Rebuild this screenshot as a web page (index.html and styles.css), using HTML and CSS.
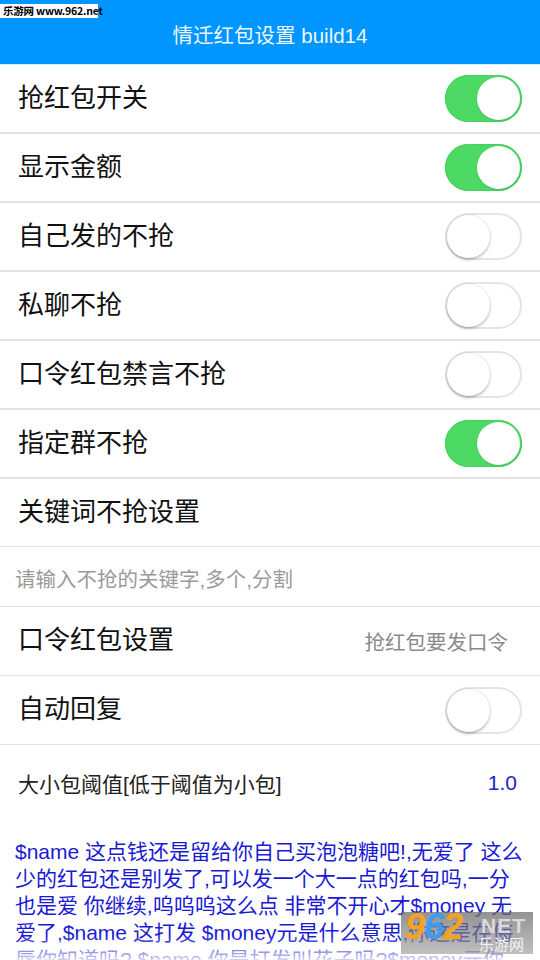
FILE: index.html
```html
<!DOCTYPE html>
<html lang="zh-CN">
<head>
<meta charset="utf-8">
<title>情迁红包设置</title>
<link rel="stylesheet" href="styles.css">
</head>
<body>
<div class="screen">
  <div class="wm-top">乐游网 www.962.net</div>
  <header class="topbar">情迁红包设置 build14</header>

  <div class="row thick"><span class="label">抢红包开关</span><span class="toggle on"><span class="knob"></span></span></div>
  <div class="row thick"><span class="label">显示金额</span><span class="toggle on"><span class="knob"></span></span></div>
  <div class="row thick"><span class="label">自己发的不抢</span><span class="toggle off"><span class="knob"></span></span></div>
  <div class="row thick"><span class="label">私聊不抢</span><span class="toggle off"><span class="knob"></span></span></div>
  <div class="row thick"><span class="label">口令红包禁言不抢</span><span class="toggle off"><span class="knob"></span></span></div>
  <div class="row thick"><span class="label">指定群不抢</span><span class="toggle on"><span class="knob"></span></span></div>

  <div class="row thin"><span class="label">关键词不抢设置</span></div>
  <div class="input-row"><span class="placeholder">请输入不抢的关键字,多个,分割</span></div>
  <div class="row thin tall"><span class="label">口令红包设置</span><span class="hint">抢红包要发口令</span></div>
  <div class="row thin tall"><span class="label">自动回复</span><span class="toggle off"><span class="knob"></span></span></div>

  <div class="threshold"><span class="small-label">大小包阈值[低于阈值为小包]</span><span class="value">1.0</span></div>

  <p class="reply">$name 这点钱还是留给你自己买泡泡糖吧!,无爱了 这么少的红包还是别发了,可以发一个大一点的红包吗,一分也是爱 你继续,呜呜呜这么点 非常不开心才$money 无爱了,$name 这打发 $money元是什么意思,你这是在侮辱你知道吗?,$name 你是打发叫花子吗?$money元你</p>

  <div class="fade"></div>
  <div class="wm-logo">
    <span class="logo-num"><span class="o">9</span><span class="b">6</span><span class="o">2</span></span><span class="logo-net">NET</span>
    <span class="logo-cn">乐游网</span>
  </div>
</div>
</body>
</html>
```

FILE: styles.css
```css
html, body {
  margin: 0;
  padding: 0;
  background: #ffffff;
}
body {
  font-family: "Liberation Sans", "Noto Sans CJK SC", sans-serif;
  color: #111111;
}
.screen {
  position: relative;
  width: 540px;
  height: 960px;
  overflow: hidden;
  background: #ffffff;
}
.wm-top {
  position: absolute;
  left: 0;
  top: 4px;
  width: 98px;
  height: 14px;
  background: #ffffff;
  color: #000000;
  font-family: "Noto Sans CJK SC", "Liberation Sans", sans-serif;
  font-size: 10.5px;
  font-weight: 700;
  line-height: 14px;
  padding-left: 3px;
  box-sizing: border-box;
  white-space: nowrap;
  letter-spacing: -0.2px;
}
.topbar {
  height: 65px;
  background: #0095ff;
  border-bottom: 1px solid #d4f0ff;
  color: #eef7ff;
  font-size: 20.5px;
  display: flex;
  align-items: center;
  justify-content: center;
  padding-top: 4px;
  box-sizing: border-box;
}
.row {
  display: flex;
  align-items: center;
  justify-content: space-between;
  padding: 0 18px 0 18px;
  box-sizing: border-box;
}
.row.thick {
  height: 69px;
  border-bottom: 2px solid #e2e2e2;
}
.row.thin {
  height: 68px;
  border-bottom: 1px solid #e2e2e2;
}
.row.thin.tall {
  height: 69px;
}
.label {
  font-size: 26px;
  line-height: 1;
  color: #111111;
  margin-top: -2px;
}
.toggle {
  position: relative;
  width: 77px;
  height: 47px;
  border-radius: 24px;
  box-sizing: border-box;
  flex: none;
}
.toggle.on {
  background: #4cd964;
  box-shadow: inset 0 0 0 1px #47cf5f;
}
.toggle.off {
  background: #ffffff;
  border: 2px solid #e4e4e4;
}
.knob {
  position: absolute;
  width: 43px;
  height: 43px;
  border-radius: 50%;
  background: #ffffff;
}
.toggle.on .knob {
  right: 2px;
  top: 2px;
  box-shadow: 0 1px 2px rgba(0, 0, 0, 0.12);
}
.toggle.off .knob {
  left: 0;
  top: 0;
  box-shadow: 0 2px 3px rgba(0, 0, 0, 0.22), 0 0 0 1px rgba(0, 0, 0, 0.06);
}
.input-row {
  height: 60px;
  border-bottom: 1px solid #e2e2e2;
  display: flex;
  align-items: center;
  padding-left: 15px;
  box-sizing: border-box;
}
.placeholder {
  font-size: 20.5px;
  color: #9a9a9a;
  margin-top: 2px;
}
.hint {
  font-size: 20.5px;
  color: #8a8a8a;
  margin-right: 14px;
}
.threshold {
  display: flex;
  align-items: center;
  justify-content: space-between;
  padding: 0 23px 0 18px;
  height: 76px;
}
.small-label {
  font-size: 21px;
  color: #222222;
}
.value {
  font-size: 21px;
  color: #2323c8;
}
.reply {
  margin: 0;
  padding: 17px 15px 0 15px;
  font-size: 21px;
  line-height: 27px;
  color: #1a1ad4;
}
.fade {
  position: absolute;
  left: 0;
  right: 0;
  bottom: 0;
  height: 24px;
  background: linear-gradient(to bottom, rgba(255, 255, 255, 0), rgba(255, 255, 255, 0.8));
}
.wm-logo {
  position: absolute;
  left: 401px;
  top: 912px;
  width: 132px;
  height: 42px;
  background: linear-gradient(to bottom, rgba(110, 110, 110, 0.75), rgba(150, 150, 150, 0.6));
  font-family: "Liberation Sans", sans-serif;
}
.logo-num {
  position: absolute;
  left: 4px;
  top: -6px;
  font-size: 36px;
  font-weight: 700;
  font-style: italic;
  letter-spacing: -1px;
}
.logo-num .o { color: #f7a21b; }
.logo-num .b { color: #3d9df3; }
.logo-net {
  position: absolute;
  left: 80px;
  top: 2px;
  font-size: 21px;
  font-weight: 700;
  color: #dadada;
  letter-spacing: 1px;
}
.logo-cn {
  position: absolute;
  left: 78px;
  top: 23px;
  font-family: "Noto Sans CJK SC", sans-serif;
  font-size: 15px;
  line-height: 18px;
  color: #f2f2f2;
}
```
